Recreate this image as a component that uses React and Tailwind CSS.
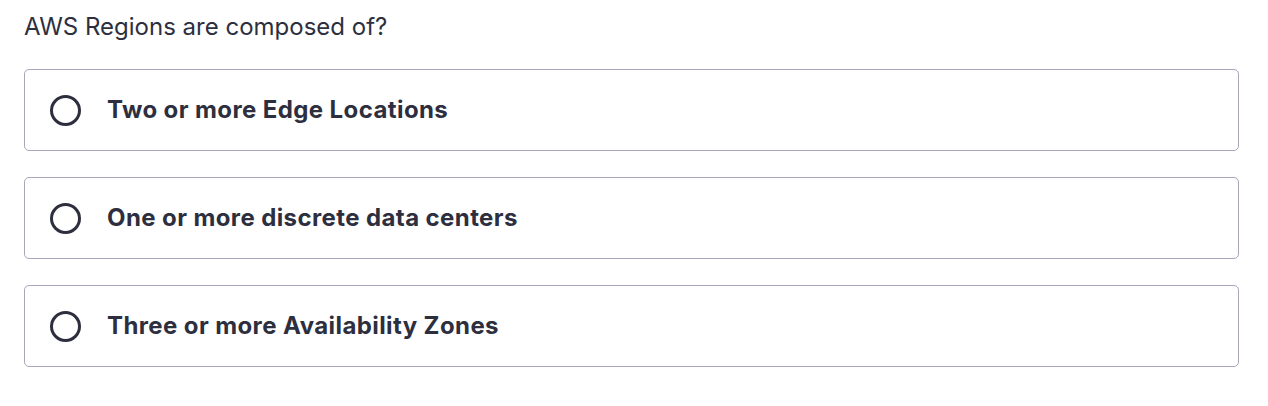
import React, { useState } from 'react'

const options = [
  'Two or more Edge Locations',
  'One or more discrete data centers',
  'Three or more Availability Zones',
]

const App = () => {
  const [selected, setSelected] = useState(null)

  return (
    <div className="bg-white w-full h-[406px] pl-6 pr-[29px] pt-[11px] text-[#2d2f3f]" style={{ fontFamily: 'Inter, "Noto Sans", sans-serif' }}>
      <p className="text-[24px] leading-[32px] font-normal">AWS Regions are composed of?</p>

      <div className="mt-[26px] flex flex-col gap-[26px]">
        {options.map((opt, i) => (
          <label
            key={opt}
            onClick={() => setSelected(i)}
            className="flex items-center h-[82px] border border-[#a8a6ba] rounded-[5px] pl-[25px] cursor-pointer"
          >
            {/* radio */}
            <span className="w-[31px] h-[31px] rounded-full border-[3px] border-[#2d2f3f] flex items-center justify-center shrink-0">
              {selected === i && <span className="w-[13px] h-[13px] rounded-full bg-[#2d2f3f]" />}
            </span>
            <span className="ml-[26px] text-[24px] font-bold tracking-[0.4px]">{opt}</span>
          </label>
        ))}
      </div>
    </div>
  )
}

export default App
